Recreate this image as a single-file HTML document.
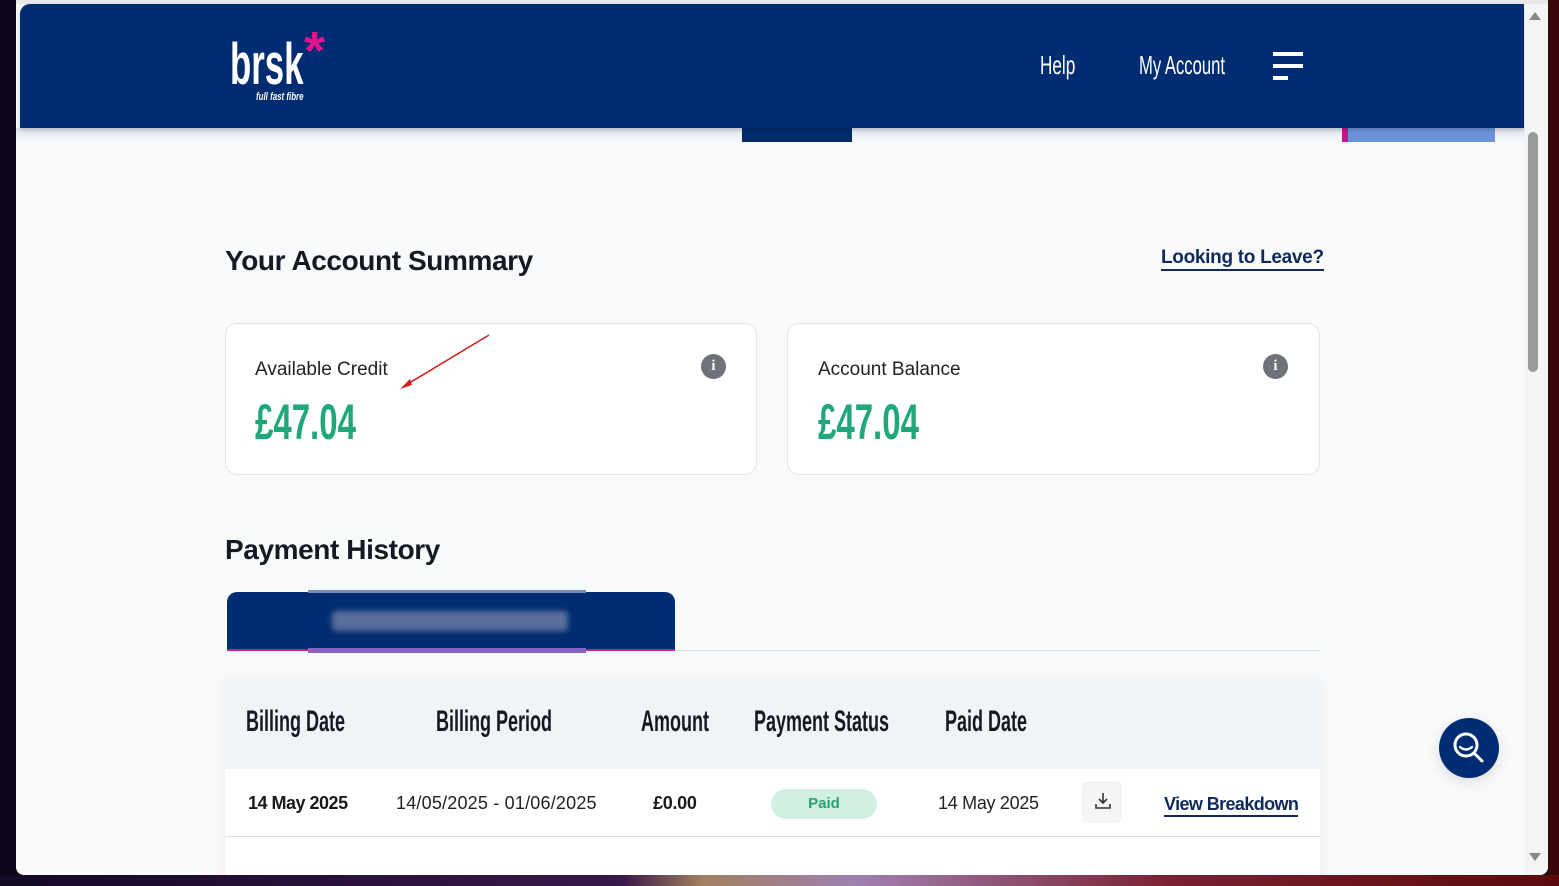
<!DOCTYPE html>
<html><head><meta charset="utf-8">
<style>
*{margin:0;padding:0;box-sizing:border-box}
body{width:1559px;height:886px;overflow:hidden;background:#1a0a1e;font-family:"Liberation Sans",sans-serif;position:relative}
.a{position:absolute}
.c{display:inline-block;transform:scaleX(.72);transform-origin:left center;white-space:nowrap}
.win{left:16px;top:0;width:1532px;height:875px;background:#f8fafc;border-radius:0 0 8px 8px;overflow:hidden}
.card{background:#fff;border:1px solid #e3e6ea;border-radius:12px}
.info{width:25px;height:25px;border-radius:50%;background:#6e737a;color:#fff;font:bold 15px/25px "Liberation Serif",serif;text-align:center}
.lab{font-size:19px;color:#222}
.amt{font-size:50px;color:#20a87a;font-weight:bold}
.th{top:705px;font-size:30px;color:#151a22;font-weight:bold}
</style></head><body>
<div class="a" style="left:0;top:0;width:16px;height:886px;background:#0c0418"></div>
<div class="a" style="left:1548px;top:0;width:11px;height:886px;background:#3a0808"></div>
<div class="a" style="left:0;top:875px;width:1559px;height:11px;background:linear-gradient(90deg,#130826,#3a1848 40%,#a08060 45%,#a080b0 55%,#7a2030 75%,#5a0a0a)"></div>
<div class="a win">
  <div class="a" style="left:0;top:0;width:1532px;height:4px;background:#e8e8ea"></div>
  <div class="a" style="left:0;top:128px;width:1509px;height:14px;background:linear-gradient(#dfe4ec,#f8fafc)"></div>
  <div class="a" style="left:726px;top:128px;width:110px;height:14px;background:#002b6a"></div>
  <div class="a" style="left:1326px;top:128px;width:153px;height:14px;background:#6a92d8;border-left:6px solid #d0108a"></div>
  <div class="a" style="left:4px;top:4px;width:1504px;height:124px;background:#002c71;border-radius:10px 0 0 0;box-shadow:0 2px 4px rgba(0,0,0,.2)"></div>
  <div class="a" style="left:214px;top:36px;color:#fff;font-weight:bold;font-size:58px;line-height:58px"><span class="c" style="transform:scaleX(.6)">brsk</span></div>
  <div class="a" style="left:288px;top:24px;color:#e0148c;font-weight:bold;font-size:54px;line-height:54px">*</div>
  <div class="a" style="left:240px;top:91px;color:#fff;font-style:italic;font-weight:bold;font-size:11px"><span class="c" style="transform:scaleX(.72)">full fast fibre</span></div>
  <div class="a" style="left:1024px;top:50px;color:#fff;font-size:26px"><span class="c" style="transform:scaleX(.66)">Help</span></div>
  <div class="a" style="left:1123px;top:50px;color:#fff;font-size:26px"><span class="c" style="transform:scaleX(.64)">My Account</span></div>
  <div class="a" style="left:1257px;top:52px;width:30px;height:4px;background:#fff"></div>
  <div class="a" style="left:1257px;top:64px;width:30px;height:4px;background:#fff"></div>
  <div class="a" style="left:1257px;top:76px;width:15px;height:4px;background:#fff"></div>
  <div class="a" style="left:1509px;top:4px;width:23px;height:871px;background:#f4f4f4"></div>
  <div class="a" style="left:1513px;top:12px;width:0;height:0;border-left:6px solid transparent;border-right:6px solid transparent;border-bottom:8px solid #888"></div>
  <div class="a" style="left:1513px;top:853px;width:0;height:0;border-left:6px solid transparent;border-right:6px solid transparent;border-top:8px solid #888"></div>
  <div class="a" style="left:1512px;top:132px;width:10px;height:240px;background:#9a9a9a;border-radius:5px"></div>

  <div class="a" style="left:209px;top:245px;font-size:28px;font-weight:bold;color:#141a24;letter-spacing:-.4px">Your Account Summary</div>
  <div class="a" style="left:1145px;top:246px;font-size:19px;font-weight:bold;color:#0e2a5a;border-bottom:2px solid #0e2a5a;line-height:23px;letter-spacing:-.3px">Looking to Leave?</div>

  <div class="a card" style="left:209px;top:323px;width:532px;height:152px"></div>
  <div class="a card" style="left:771px;top:323px;width:533px;height:152px"></div>
  <div class="a lab" style="left:239px;top:359px">Available Credit</div>
  <div class="a lab" style="left:802px;top:359px">Account Balance</div>
  <div class="a info" style="left:685px;top:354px">i</div>
  <div class="a info" style="left:1247px;top:354px">i</div>
  <div class="a amt" style="left:239px;top:393px"><span class="c" style="transform:scaleX(.66)">£47.04</span></div>
  <div class="a amt" style="left:802px;top:393px"><span class="c" style="transform:scaleX(.66)">£47.04</span></div>
  <svg class="a" style="left:380px;top:330px" width="120" height="62"><line x1="93" y1="5" x2="10" y2="55" stroke="#d02020" stroke-width="1.6"/><path d="M4 59 L14 49 L16 55 Z" fill="#d02020"/></svg>

  <div class="a" style="left:209px;top:534px;font-size:28px;font-weight:bold;color:#141a24;letter-spacing:-.4px">Payment History</div>
  <div class="a" style="left:211px;top:592px;width:448px;height:59px;background:#002c71;border-radius:10px 10px 0 0;border-bottom:2px solid #c0208a"></div>
  <div class="a" style="left:292px;top:590px;width:278px;height:3px;background:#7a8cb0"></div>
  <div class="a" style="left:292px;top:648px;width:278px;height:5px;background:#8a62c0"></div>
  <div class="a" style="left:316px;top:611px;width:236px;height:20px;background:#5a6e9c;filter:blur(3px);border-radius:4px"></div>
  <div class="a" style="left:659px;top:650px;width:645px;height:1px;background:#d8dee6"></div>

  <div class="a" style="left:209px;top:681px;width:1095px;height:200px;background:#fff;box-shadow:0 0 12px rgba(0,0,0,.07)"></div>
  <div class="a" style="left:209px;top:681px;width:1095px;height:88px;background:#f0f3f7"></div>
  <div class="a" style="left:209px;top:836px;width:1095px;height:1px;background:#dde1e6"></div>
  <div class="a th" style="left:230px"><span class="c" style="transform:scaleX(.6)">Billing Date</span></div>
  <div class="a th" style="left:420px"><span class="c" style="transform:scaleX(.6)">Billing Period</span></div>
  <div class="a th" style="left:625px"><span class="c" style="transform:scaleX(.6)">Amount</span></div>
  <div class="a th" style="left:738px"><span class="c" style="transform:scaleX(.6)">Payment Status</span></div>
  <div class="a th" style="left:929px"><span class="c" style="transform:scaleX(.6)">Paid Date</span></div>
  <div class="a" style="top:793px;left:232px;font-size:18px;font-weight:bold;color:#1a1a1a;letter-spacing:-.5px">14 May 2025</div>
  <div class="a" style="top:793px;left:380px;font-size:18px;color:#222;letter-spacing:.2px">14/05/2025 - 01/06/2025</div>
  <div class="a" style="top:793px;left:637px;font-size:18px;font-weight:bold;color:#1a1a1a;letter-spacing:-.3px">£0.00</div>
  <div class="a" style="top:789px;left:755px;width:106px;height:30px;border-radius:15px;background:#d2f0e2;color:#2aa070;font-size:15px;font-weight:bold;text-align:center;line-height:30px">Paid</div>
  <div class="a" style="top:793px;left:922px;font-size:18px;color:#222;letter-spacing:-.3px">14 May 2025</div>
  <div class="a" style="top:781px;left:1066px;width:40px;height:42px;background:#f4f5f7;border-radius:4px"></div>
  <svg class="a" style="left:1078px;top:792px" width="18" height="18" fill="none" stroke="#333" stroke-width="1.6"><path d="M9 1v10M5 7l4 4 4-4M2 12v4h14v-4"/></svg>
  <div class="a" style="top:793px;left:1148px;font-size:18px;font-weight:bold;color:#0e2a5a;border-bottom:2px solid #0e2a5a;line-height:22px;letter-spacing:-.6px">View Breakdown</div>
  <div class="a" style="left:1423px;top:718px;width:60px;height:60px;border-radius:50%;background:#002c71;box-shadow:0 4px 14px rgba(0,0,0,.12)"></div>
  <svg class="a" style="left:1423px;top:718px" width="60" height="60" fill="none" stroke="#fff" stroke-width="3" stroke-linecap="round"><circle cx="27" cy="27" r="11"/><path d="M35 35l8 8"/><path d="M21 29q6 5 12 0" stroke-width="2.4"/></svg>
</div>
</body></html>
